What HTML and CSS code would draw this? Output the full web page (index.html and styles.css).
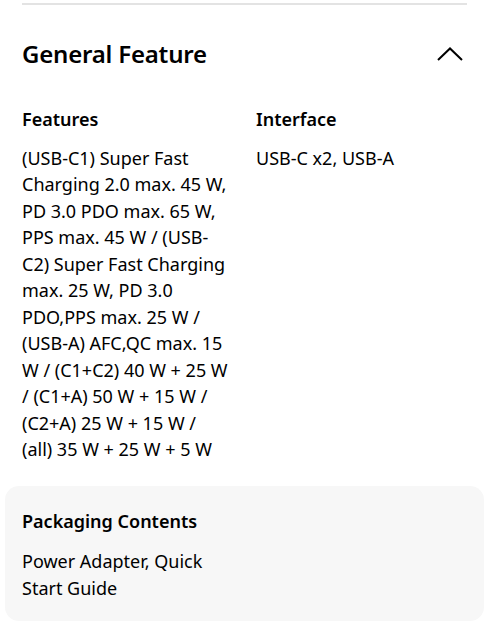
FILE: index.html
```html
<!DOCTYPE html>
<html>
<head>
<meta charset="utf-8">
<link rel="stylesheet" href="styles.css">
</head>
<body>
<div class="page">
  <div class="divider"></div>
  <div class="header">
    <h2 class="title">General Feature</h2>
    <svg class="chevron" width="26" height="14" viewBox="0 0 26 14"><path d="M1 13 L13 1.5 L25 13" fill="none" stroke="#000" stroke-width="2"/></svg>
  </div>
  <div class="specs">
    <div class="spec">
      <h3 class="spec-title">Features</h3>
      <p class="spec-value">(USB-C1) Super Fast Charging 2.0 max. 45 W, PD 3.0 PDO max. 65 W, PPS max. 45 W / (USB-C2) Super Fast Charging max. 25 W, PD 3.0 PDO,PPS max. 25 W / (USB-A) AFC,QC max. 15 W / (C1+C2) 40 W + 25 W / (C1+A) 50 W + 15 W / (C2+A) 25 W + 15 W / (all) 35 W + 25 W + 5 W</p>
    </div>
    <div class="spec">
      <h3 class="spec-title">Interface</h3>
      <p class="spec-value">USB-C x2, USB-A</p>
    </div>
  </div>
</div>
<div class="card">
  <h3 class="spec-title">Packaging Contents</h3>
  <p class="spec-value narrow">Power Adapter, Quick Start Guide</p>
</div>
</body>
</html>
```
FILE: styles.css
```css
html, body {
  margin: 0;
  padding: 0;
  background: #fff;
}
body {
  font-family: "Noto Sans", "Open Sans", sans-serif;
  color: #000;
  width: 500px;
  height: 623px;
  overflow: hidden;
}
.page {
  padding: 3px 33px 0 22px;
}
.divider {
  height: 2px;
  background: #e3e3e3;
}
.header {
  display: flex;
  align-items: center;
  justify-content: space-between;
  height: 97px;
  padding-right: 4px;
}
.title {
  margin: 0;
  font-size: 24px;
  font-weight: 600;
  letter-spacing: -0.2px;
}
.chevron {
  display: block;
  margin-top: 1px;
}
.specs {
  display: grid;
  grid-template-columns: 208px 208px;
  column-gap: 26px;
  margin-top: 4px;
}
.spec-title {
  margin: 0;
  font-size: 18px;
  font-weight: 600;
  line-height: 26px;
}
.spec-value {
  margin: 13px 0 0;
  font-size: 18px;
  font-weight: 400;
  line-height: 26.45px;
}
.card {
  margin: 24px 16px 0 5px;
  background: #f7f7f7;
  border-radius: 14px;
  padding: 22px 17px 20px;
}
.card .spec-value {
  margin-top: 14px;
}
.narrow {
  width: 200px;
}
```
